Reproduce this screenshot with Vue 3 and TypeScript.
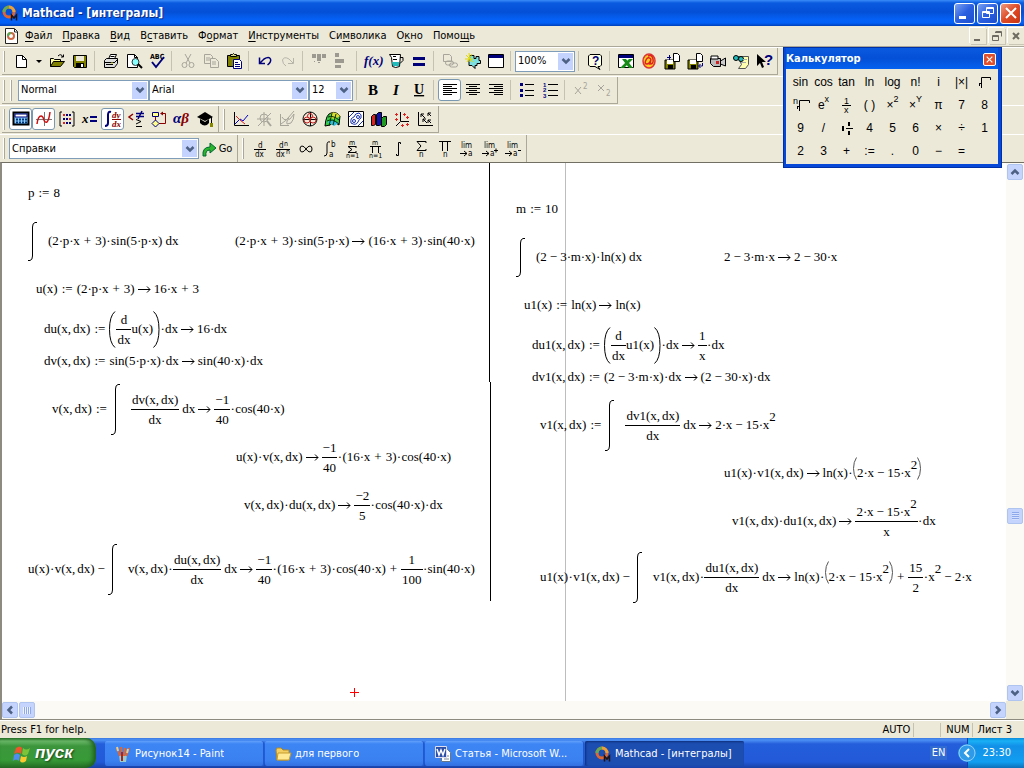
<script setup lang="ts">
import { h, type FunctionalComponent, type VNode } from 'vue'

type MathNode =
  | string
  | { frac: [MathNode[], MathNode[]] }
  | { int: 'small' | 'tall' }
  | { paren: MathNode[]; size: 'big' | 'mid' }
  | { sup: string }

interface Region { x: number; y: number; nodes: MathNode[] }
interface Tool { icon?: string; label?: string; sep?: boolean; active?: boolean; caret?: boolean }

const frac = (n: string | MathNode[], d: string): MathNode => ({ frac: [typeof n === 'string' ? [n] : n, [d]] })
const sup: MathNode = { sup: '2' }
const tall: MathNode = { int: 'tall' }
const small: MathNode = { int: 'small' }

const regions: Region[] = [
  { x: 26, y: 30, nodes: ['p:=8'] },
  { x: 26, y: 78, nodes: [small, '(2·p·x+3)•sin(5·p·x)_dx'] },
  { x: 233, y: 78, nodes: ['(2·p·x+3)•sin(5·p·x)→(16·x+3)•sin(40·x)'] },
  { x: 34, y: 126, nodes: ['u(x):=(2·p·x+3)→16·x+3'] },
  { x: 42, y: 166, nodes: ['du(x,dx):=', { paren: [frac('d', 'dx'), 'u(x)'], size: 'big' }, '•dx→16·dx'] },
  { x: 42, y: 198, nodes: ['dv(x,dx):=sin(5·p·x)•dx→sin(40·x)•dx'] },
  { x: 50, y: 246, nodes: ['v(x,dx):=', tall, frac('dv(x,dx)', 'dx'), '_dx→', frac('−1', '40'), '•cos(40·x)'] },
  { x: 234, y: 294, nodes: ['u(x)•v(x,dx)→', frac('−1', '40'), '•(16·x+3)•cos(40·x)'] },
  { x: 242, y: 342, nodes: ['v(x,dx)•du(x,dx)→', frac('−2', '5'), '•cos(40·x)•dx'] },
  { x: 26, y: 406, nodes: ['u(x)•v(x,dx)−', tall, 'v(x,dx)•', frac('du(x,dx)', 'dx'), '_dx→', frac('−1', '40'), '•(16·x+3)•cos(40·x)+', frac('1', '100'), '•sin(40·x)'] },
  { x: 514, y: 46, nodes: ['m:=10'] },
  { x: 514, y: 94, nodes: [small, '(2−3·m·x)•ln(x)_dx'] },
  { x: 722, y: 94, nodes: ['2−3·m·x→2−30·x'] },
  { x: 522, y: 142, nodes: ['u1(x):=ln(x)→ln(x)'] },
  { x: 530, y: 182, nodes: ['du1(x,dx):=', { paren: [frac('d', 'dx'), 'u1(x)'], size: 'big' }, '•dx→', frac('1', 'x'), '•dx'] },
  { x: 530, y: 214, nodes: ['dv1(x,dx):=(2−3·m·x)•dx→(2−30·x)•dx'] },
  { x: 538, y: 262, nodes: ['v1(x,dx):=', tall, frac('dv1(x,dx)', 'dx'), '_dx→2·x−15·x', sup] },
  { x: 722, y: 310, nodes: ['u1(x)•v1(x,dx)→ln(x)•', { paren: ['2·x−15·x', sup], size: 'mid' }] },
  { x: 730, y: 358, nodes: ['v1(x,dx)•du1(x,dx)→', frac(['2·x−15·x', sup], 'x'), '•dx'] },
  { x: 538, y: 414, nodes: ['u1(x)•v1(x,dx)−', tall, 'v1(x,dx)•', frac('du1(x,dx)', 'dx'), '_dx→ln(x)•', { paren: ['2·x−15·x', sup], size: 'mid' }, '+', frac('15', '2'), '•x', sup, '−2·x'] },
]

const tokenClass: Record<string, string> = {
  '·': 'dot', '•': 'dot wide', '+': 'op', '−': 'op minus', ':=': 'def', '→': 'arrow', ',': 'comma', '_': 'space',
}

function renderNodes(nodes: MathNode[]): VNode[] {
  return nodes.flatMap((node, index): VNode[] => {
    if (typeof node === 'string') {
      const parts = node.match(/:=|[·•+−→,_]|[^:·•+−→,_]+/g) ?? []
      return parts.map((part, i) => {
        const unary = index === 0 && i === 0 && part === '−'
        if (part === '→') {
          return h('svg', { class: 'arrow', viewBox: '0 0 13 7', role: 'img', 'aria-label': '→' }, [
            h('path', { d: 'M0 3.5H12M9 .5L12 3.5L9 6.5' }),
          ])
        }
        const text = part === '•' ? '·' : part === '_' ? '' : part
        return h('span', { class: unary ? 'neg' : tokenClass[part] ?? 'run' }, text)
      })
    }
    if ('frac' in node) {
      return [h('span', { class: 'frac' }, [
        h('span', { class: 'num' }, renderNodes(node.frac[0])),
        h('span', { class: 'bar' }),
        h('span', { class: 'den' }, renderNodes(node.frac[1])),
      ])]
    }
    if ('int' in node) {
      const d = node.int === 'tall' ? 'M0 50.5H2Q4.500 50 4.500 46V5Q4.500 1 7 .5H9' : 'M0 38.500H2Q4.500 38 4.500 34V5Q4.500 1 7 .5H9'
      return [h('svg', { class: ['int', node.int], viewBox: node.int === 'tall' ? '0 0 10 51' : '0 0 10 39' }, [h('path', { d })])]
    }
    if ('paren' in node) {
      const height = node.size === 'big' ? 37 : 23
      const left = node.size === 'big' ? 'M6 .5Q.5 5 .5 18.500Q.5 32 6 36.500' : 'M3.500 .5Q.5 5 .5 11.500Q.5 18 3.500 22.500'
      const right = node.size === 'big' ? 'M.5 .5Q6 5 6 18.500Q6 32 .5 36.500' : 'M.5 .5Q3.500 5 3.500 11.500Q3.500 18 .5 22.500'
      const width = node.size === 'big' ? 7 : 4
      return [h('span', { class: ['paren', node.size] }, [
        h('svg', { viewBox: `0 0 ${width} ${height}` }, [h('path', { d: left })]),
        h('span', { class: 'inner' }, renderNodes(node.paren)),
        h('svg', { viewBox: `0 0 ${width} ${height}` }, [h('path', { d: right })]),
      ])]
    }
    return [h('span', { class: 'power' }, node.sup)]
  })
}

const MathRow: FunctionalComponent<{ nodes: MathNode[] }> = (props) => h('span', { class: 'math' }, renderNodes(props.nodes))
MathRow.props = ['nodes']

const mono = 'fill="none" stroke="#000"'
const floppy = '<path d="M1 7h10v9H1z" fill="#808000" stroke="#000"/><path d="M3 7h6v4H3z" fill="#fff"/><path d="M4 12h5v4H4z" fill="#000"/>'
const page = '<path d="M9.500 .5h4l2 2v6h-6z" fill="#fff" stroke="#000"/>'
const serif = 'font-family="Liberation Serif, serif"'
const small8 = 'font-family="DejaVu Sans Condensed, sans-serif" font-size="8"'

const icons: Record<string, string> = {
  new: '<path d="M3.500 2.500h6l4 4v8h-10z" fill="#fff" stroke="#000"/><path d="M9.500 2.500v4h4" fill="none" stroke="#000"/>',
  open: '<path d="M1.500 13.500v-8h3l1 1h6v2" fill="#ffffa0" stroke="#000"/><path d="M1.500 13.500l3-5h11l-4 5z" fill="#808000" stroke="#000"/><path d="M9 3q3-3 5 1m-2 0h2.500v-2.500" fill="none" stroke="#000"/>',
  save: '<path d="M1.500 2.500h13v12h-12l-1-1z" fill="#808000" stroke="#000"/><path d="M4 3h8v5H4z" fill="#ece9d8"/><path d="M4 10h8v5H4z" fill="#000"/><path d="M9 11h2v3H9z" fill="#fff"/>',
  print: '<path d="M5.500 6l2-4.500h6l-2 4.500" fill="#fff" stroke="#000"/><path d="M1.500 7.500l2-2h11v5l-3 4h-10z" fill="#ddd" stroke="#000"/><path d="M1 9.500h11M3 11.500h7M12 9l3-3M7.500 3.500h4" stroke="#000"/><path d="M8 10h2" stroke="#dd0"/>',
  preview: '<path d="M1.500 1.500h7l3 3v10h-10z" fill="#fff" stroke="#000"/><path d="M8.500 1.500v3h3" fill="none" stroke="#000"/><circle cx="9.500" cy="9" r="3.500" fill="#8ff" stroke="#333"/><path d="M12 11l4 4" stroke="#000" stroke-width="2"/>',
  spell: `<text x="1" y="6" ${small8} font-weight="bold" style="font-size:7px">ABC</text><path d="M3 9l4 5L15 4" fill="none" stroke="#00007b" stroke-width="2"/>`,
  cut: '<g fill="none" stroke="#a7a59a"><path d="M5 1l5 9M11 1l-5 9"/><circle cx="4.500" cy="12" r="2.500"/><circle cx="11.500" cy="12" r="2.500"/></g>',
  copy: '<g fill="#ece9d8" stroke="#a7a59a"><path d="M1.500 1.500h6l2 2v7h-8zM3 5h4M3 7h4"/><path d="M7.500 5.500h5l3 3v6h-8zM9 9h4M9 11h4"/></g>',
  paste: '<path d="M1.500 2.500h12v11h-12z" fill="#808000" stroke="#000"/><path d="M4.500 3.500v-2h2l1-1 1 1h2v2z" fill="#dd8" stroke="#000"/><path d="M7.500 6.500h6l2 2v7h-8z" fill="#fff" stroke="#000080"/><path d="M9 9.500h3M9 11.500h5M9 13.500h5" stroke="#000080"/>',
  undo: '<path d="M2.500 4.500v6H8M3 10l4-4q5-3 6.500 0 1 3-3 6" fill="none" stroke="#00007b" stroke-width="1.500"/>',
  redo: '<path d="M13.500 5v5.500H8M13 10L9 6Q4 3 2.500 7q0 4 3.500 6" fill="none" stroke="#b7b5a8"/>',
  across: '<g fill="#9c9a90"><path d="M1 1h4v4H1zM6 1h4v7H6zM11 1h4v4h-4zM3 8h1v1H3zM7 9h2v1H7z"/></g>',
  down: '<g fill="#9c9a90"><path d="M1 0h4v4H1zM1 6h9v4H1zM1 12h6v3H1z"/></g>',
  fx: `<text x="-1" y="12" ${serif} font-size="13" font-weight="bold" font-style="italic" fill="#00007b">f(x)</text>`,
  cup: '<path d="M1.500 1.500h11l-1 12q-4 2-7 0l-1-9z" fill="#fff" stroke="#000"/><path d="M12 4.500h3v3l-3 3" fill="none" stroke="#000"/><path d="M4 9h7v4H5z" fill="#2bb"/><path d="M5 3.500h3M5 6.500h4" stroke="#000"/>',
  equals: '<path d="M2 4h12v3H2zM2 10h12v3H2z" fill="#00007b"/>',
  link: '<g fill="none" stroke="#a7a59a"><path d="M1.500 1.500h6l2 2v5h-8z"/><rect x="3.500" y="8" width="8" height="4" rx="2"/><rect x="7.500" y="10" width="8" height="4" rx="2"/></g>',
  gear: '<path d="M5 2.500h4v3h2v-2h3v4h1.500v3H12v2h-2v3L7 12.500H4v-4z" fill="#7de0e0" stroke="#000"/><path d="M1 2l7 7M4 0l1 9M0 6h8M7 1L2 9" stroke="#e0d800"/>',
  window: '<path d="M.5 1.500h15v13H.5z" fill="#fff" stroke="#000"/><path d="M1 2h14v3H1z" fill="#00007b"/>',
  help: '<path d="M3 1.500h10l1.500 1.500v9l-1.500 1.500h-2l2 3-5-3h-5l-1.500-1.500v-9z" fill="#ffffe1" stroke="#000"/><text x="5" y="12" font-size="12" font-weight="bold" fill="#00007b" font-family="Liberation Sans, sans-serif">?</text>',
  excel: '<path d="M.5 1.500h15v13H.5z" fill="#fff" stroke="#000"/><path d="M1 2h14v3H1z" fill="#00007b"/><path d="M4 6h4l7 9h-4zM11 6h4l-9 9H2z" fill="#188a18"/>',
  at: '<ellipse cx="8" cy="8" rx="6" ry="7" fill="#fc2" stroke="#d33" stroke-width="1.500"/><path d="M10 6q-3-3-5 1t1 4q3 0 4-5l-1 5q4 0 3-5T7 3" fill="none" stroke="#d22" stroke-width="1.500"/>',
  importDoc: floppy + page + '<path d="M3 4.500h4M5.500 2v5" stroke="#00007b"/>',
  exportDoc: floppy + page + '<path d="M15.500 10v3H12m1.500-2l-2 2 2 2" stroke="#00007b" fill="none"/>',
  camera: '<path d="M.5 5.500h10v8h-7l-3-3z" fill="#bbb" stroke="#000"/><path d="M10.500 8l5-3v8l-5-2z" fill="#ccc" stroke="#000"/><path d="M1 3h7v3H1z" fill="#fff" stroke="#000"/><path d="M6 8h3v3H6z" fill="#c22"/>',
  notes: '<path d="M5 3.500h10.500v8l-3 4h-7l3-4z" fill="#ffffb0" stroke="#555"/><g fill="#2bb" stroke="#000"><circle cx="3" cy="5" r="2.500"/><circle cx="8" cy="6" r="2.500"/></g><path d="M10 6.500h4M8 9.500h5" stroke="#aaa"/>',
  whats: '<path d="M1 1v12l3-3 2 5 2-1-2-5h4z"/><text x="8" y="12" font-size="15" font-weight="bold" fill="#00007b" font-family="Liberation Sans, sans-serif">?</text>',
  bold: `<text x="3" y="13" ${serif} font-size="15" font-weight="bold">B</text>`,
  italic: `<text x="5" y="13" ${serif} font-size="15" font-weight="bold" font-style="italic">I</text>`,
  underline: `<text x="3" y="12" ${serif} font-size="14" font-weight="bold" text-decoration="underline">U</text>`,
  left: '<path d="M1 2.500h14M1 4.500h9M1 6.500h14M1 8.500h9M1 10.500h14M1 12.500h9" stroke="#000"/>',
  center: '<path d="M1 2.500h14M4 4.500h8M1 6.500h14M4 8.500h8M1 10.500h14M4 12.500h8" stroke="#000"/>',
  right: '<path d="M1 2.500h14M6 4.500h9M1 6.500h14M6 8.500h9M1 10.500h14M6 12.500h9" stroke="#000"/>',
  bullets: '<path d="M1 1h3v3H1zM1 7h3v3H1zM1 12h3v3H1z" fill="#00007b"/><path d="M6 2.500h9M6 8.500h9M6 13.500h9" stroke="#000"/>',
  numbers: '<g font-size="6" font-weight="bold" fill="#00007b" font-family="Liberation Sans, sans-serif"><text x="1" y="5">1</text><text x="1" y="10">2</text><text x="1" y="16">3</text></g><path d="M6 2.500h10M6 8.500h10M6 13.500h10" stroke="#000"/>',
  square: '<path d="M2 5l6 7M8 5l-6 7" stroke="#a7a59a"/><text x="10" y="7" font-size="8" fill="#a7a59a">2</text>',
  lower: '<path d="M2 3l6 6M8 3l-6 6" stroke="#a7a59a"/><text x="10" y="14" font-size="8" fill="#a7a59a">2</text>',
  calc: '<path d="M.5 1.500h15v12H.5z" fill="#8cf" stroke="#000" stroke-width="2"/><path d="M2 3h12v3H2z" fill="#fff" stroke="#00007b"/><path d="M3 8.500h11M3 11.500h11" stroke="#037" stroke-width="2" stroke-dasharray="2 1"/>',
  plot: '<path d="M0 8.500h16M8.500 1v14" stroke="#777"/><path d="M1 13q1-8 4-8 2 0 3 4 1 3 3 2 2-2 3-10" fill="none" stroke="#c11" stroke-width="1.500"/>',
  matrix: '<path d="M3 1H1v14h2M13 1h2v14h-2" fill="none" stroke="#000"/><g fill="#d22"><path d="M4 3h2v2H4zM4 11h2v2H4zM10 7h2v2h-2z"/></g><g fill="#007"><path d="M7 3h2v2H7zM10 3h2v2h-2zM4 7h2v2H4zM7 7h2v2H7zM7 11h2v2H7zM10 11h2v2h-2z"/></g>',
  xeq: `<text x="0" y="12" ${serif} font-size="13" font-weight="bold" font-style="italic">x</text><path d="M8 5h7v2H8zM8 9h7v2H8z" fill="#00007b"/>`,
  calculus: `<path d="M6 1q-3-1-3 3v8q0 3-3 3" fill="none" stroke="#00007b" stroke-width="2"/><g ${serif} font-size="9" font-weight="bold" font-style="italic" fill="#8b0000"><text x="7" y="7">dy</text><text x="7" y="16">dx</text></g><path d="M7 8.500h9" stroke="#8b0000"/>`,
  bool: '<path d="M5 3L1 6l4 3" fill="none" stroke="#8b0000" stroke-width="1.500"/><path d="M8 2.500h8M8 5.500h8M14 0l-4 8" stroke="#00007b" stroke-width="1.500"/><path d="M8 8.500l5 2-5 2.500M8 15.500h6" fill="none" stroke="#000"/>',
  flow: '<path d="M1.500 1.500h6v4h-6z" fill="#ff8" stroke="#00007b"/><path d="M4.500 6v4M8 12.500h6.500v-10H10" fill="none" stroke="#8b0000"/><path d="M9 2.500l3-2v4z" fill="#8b0000"/><path d="M4.500 9l3.500 3.500L4.500 16 1 12.500z" fill="#ff8" stroke="#00007b"/>',
  greek: `<text x="-1" y="12" ${serif} font-size="15" font-weight="bold" font-style="italic"><tspan fill="#00007b">α</tspan><tspan fill="#8b0000">β</tspan></text>`,
  hat: '<path d="M0 6l8-5 8 5-8 4z"/><path d="M3 8v4q5 5 9 0V8l-4 3z"/><path d="M14.500 6v7" stroke="#000"/><path d="M13 12h3v4h-3z" fill="#880"/>',
  xy: '<path d="M1.500 1v13.500H16" fill="none" stroke="#000"/><path d="M2 13l5-5 3 2 5-6" fill="none" stroke="#00c"/><path d="M3 5l4 4 5 4" fill="none" stroke="#d22"/>',
  zoomPlot: '<g fill="none" stroke="#a7a59a"><path d="M2 15L15 2M8 1v14M1 8h14"/><circle cx="8" cy="7" r="4"/><path d="M11 10l4 5" stroke-width="2"/></g>',
  trace: '<g fill="none" stroke="#a7a59a"><path d="M1.500 3v12M1 14.500h9M3 6q3 5 6 1l6-7M2 13l8-6"/><path d="M8 13q-1-4 3-5l4-5q0 6-3 9z"/></g>',
  polar: '<circle cx="8" cy="8" r="7" fill="none" stroke="#000"/><path d="M1 8.500h14M8.500 1v14" stroke="#000"/><g fill="none" stroke="#c22"><circle cx="8" cy="5" r="2.500"/><circle cx="5" cy="9" r="3"/><circle cx="11" cy="9" r="3"/></g>',
  surface: '<path d="M0 15q1-12 6-13 5-2 9 3l-1 9-5-3-4 3z" fill="#3c4" stroke="#000"/><path d="M6 2q5-2 9 3l-5 3-5-1z" fill="#dd3"/><path d="M2 11l5-2 7 3-5 3z" fill="#3bd"/><path d="M3 6q5-2 11 3M2 10q5-3 12 3M7 2L4 15M11 3L8 14" fill="none" stroke="#030"/>',
  contour: '<path d="M.5 .5h15v15H.5z" fill="#fff" stroke="#000"/><g fill="none" stroke="#1630b0"><path d="M3 12q-1-5 3-6 1-4 5-4 3 1 2 5-2 1-3 4-2 4-7 1z"/><circle cx="6" cy="10" r="1.500"/><circle cx="10" cy="6" r="1.500"/><path d="M1 6L6 1M10 15l5-5"/></g>',
  bars: '<path d="M.5 5.500l2-2h2v10l-2 1h-2z" fill="#d22" stroke="#000"/><path d="M5.500 3.500l2-2h3v12l-2 1h-3z" fill="#11a" stroke="#000"/><path d="M10.500 7.500l2-2h3v8l-2 2h-3z" fill="#292" stroke="#000"/>',
  scatter: '<path d="M6.500 1v9.500H15M6 11l-4 4" fill="none" stroke="#000"/><path d="M1 3.500h3M2.500 2v3M9 3.500h3M10.500 2v3M1 8.500h3M2.500 7v3M12 6.500h3M13.500 5v3M7 14.500h3M8.500 13v3M12 13.500h3M13.500 12v3" stroke="#d22"/>',
  vector: '<path d="M1.500 1v13.500H16" fill="none" stroke="#000"/><path d="M8 7L4 3m0 3V3h3M14 5l-3-3m0 3V2h3M10 12L6 8m0 3V8h3M14 12l-3-3m0 3V9h3" fill="none" stroke="#000"/>',
  go: '<path d="M1 15Q0 6 8 6V2l6 5-6 5V9Q3 9 4 15z" fill="#2db52d" stroke="#063"/>',
  deriv: `<g ${small8}><text x="6" y="7">d</text><text x="3" y="16">dx</text></g><path d="M2 8.500h12" stroke="#000"/>`,
  nderiv: `<g ${small8}><text x="4" y="7">d</text><text x="1" y="16">dx</text><text x="9" y="5" style="font-size:7px">n</text><text x="11" y="13" style="font-size:7px">n</text></g><path d="M1 8.500h14" stroke="#000"/>`,
  inf: '<path d="M8 8Q6 5 4 5 2 5 2 8t2 3q2 0 4-3t4-3q2 0 2 3t-2 3q-2 0-4-3" fill="none" stroke="#000"/>',
  integ: `<path d="M9 1q-3-1-3 3v8q0 3-3 3" ${mono}/><g ${small8}><text x="10" y="6">b</text><text x="8" y="16">a</text></g>`,
  sumN: `<path d="M12 5.500H4l4 3-4 3h8M12 5v2M12 12v-2" ${mono}/><g ${small8} style="font-size:7px"><text x="5" y="4">m</text><text x="2" y="17">n=1</text></g>`,
  prodN: `<path d="M3 5.500h11M5.500 5v7M11.500 5v7" ${mono}/><g ${small8} style="font-size:7px"><text x="5" y="4">m</text><text x="2" y="17">n=1</text></g>`,
  integ0: `<path d="M10.500 3V1.500h-2V14.500h-2V13" ${mono}/>`,
  sum: `<path d="M13 2V.5H4l4 4.500-4 4.500h9V8" ${mono}/><text x="6" y="16" ${small8}>n</text>`,
  prod: `<path d="M3 .5h12M6.500 1v9M11.500 1v9" ${mono}/><text x="7" y="16" ${small8}>n</text>`,
  lim: `<g ${small8}><text x="2" y="7">lim</text><text x="9" y="15">a</text></g><path d="M1 12.500h7M5 10l3 2.500L5 15" ${mono}/>`,
  limPlus: `<g ${small8}><text x="2" y="7">lim</text><text x="8" y="15">a</text></g><path d="M0 12.500h7M4 10l3 2.500L4 15M12 9.500h4M14 7.500v4" ${mono}/>`,
  limMinus: `<g ${small8}><text x="2" y="7">lim</text><text x="8" y="15">a</text></g><path d="M0 12.500h7M4 10l3 2.500L4 15M13 9.500h3" ${mono}/>`,
  mathcad: '<circle cx="7" cy="7" r="5" fill="none" stroke="#d63" stroke-width="3"/><path d="M2 7a5 5 0 0 1 5-5" fill="none" stroke="#6a5" stroke-width="3"/><path d="M7 2a5 5 0 0 1 5 5" fill="none" stroke="#e9a13c" stroke-width="3"/><path d="M9.500 15.500V10l2.500 3 2.500-3v5.500" fill="none" stroke="#211" stroke-width="1.500"/>',
  docIcon: '<path d="M1.500 .5h9l3 3v12h-12z" fill="#fff" stroke="#222"/><circle cx="7" cy="8" r="3" fill="none" stroke="#c64" stroke-width="2"/><path d="M4 8a3 3 0 0 1 3-3" fill="none" stroke="#5a5" stroke-width="2"/><path d="M10.500 1v3h3" fill="none" stroke="#222"/>',
  paint: '<path d="M4 9h8l-1 7H5z" fill="#9cc"/><path d="M5 10L2 2M7 10L6 1M9 10l1-8M11 10l3-8" stroke="#d63" stroke-width="2"/><path d="M2 1l1 4M13 3l-1 4" stroke="#ec8" stroke-width="2"/><path d="M7 15V6" stroke="#a22" stroke-width="2"/>',
  folder: '<path d="M1 4l1-2h4l2 2h6v10H2z" fill="#f3cf63" stroke="#b58a20"/><path d="M3 7h13l-2 7H2z" fill="#ffe994" stroke="#c59b2e"/>',
  word: '<path d="M6.500 3.500h6l3 3v9h-9z" fill="#fff" stroke="#678"/><path d="M.5 .5h11v11H.5z" fill="#2c4fa8" stroke="#dde"/><path d="M2 3l2 6 2-5 2 5 2-6" fill="none" stroke="#fff" stroke-width="1.500"/><path d="M9 13h5M12 10h2" stroke="#789"/>',
  flag: '<path d="M3 3q4-3 6 0L8 9Q5 6 1 9z" fill="#f0542c"/><path d="M10 3q3 3 7 0l-2 6q-3 3-6 0z" fill="#7cc33a"/><path d="M1 10q3-3 6 0l-1 6q-3-3-6 0z" fill="#4f8df0"/><path d="M8 11q3 2 6 0l-1 5q-4 3-6 0z" fill="#fbc92d"/>',
  up: '<path d="M4.500 10L8 6.500l3.500 3.500" fill="none" stroke="#4d6185" stroke-width="2.500"/>',
  dn: '<path d="M4.500 6L8 9.500 11.500 6" fill="none" stroke="#4d6185" stroke-width="2.500"/>',
  lt: '<path d="M10 4.500L6.500 8l3.500 3.500" fill="none" stroke="#4d6185" stroke-width="2.500"/>',
  rt: '<path d="M6 4.500L9.500 8 6 11.500" fill="none" stroke="#4d6185" stroke-width="2.500"/>',
  min: '<path d="M2 11h7v3H2z" fill="#fff"/>',
  max: '<path d="M6.500 2.500h7v6h-7zM6 3.500h8M2.500 6.500h7v6h-7zM2 7.500h8" fill="none" stroke="#fff"/>',
  close: '<path d="M3 3l10 10M13 3L3 13" stroke="#fff" stroke-width="2"/>',
  mmin: '<path d="M4 11h6v2H4z" fill="#6d6b62"/>',
  mmax: '<path d="M6.500 3.500h6v5M6 4.500h7M3.500 7.500h6v5h-6zM3 8.500h7" fill="none" stroke="#6d6b62"/>',
  mclose: '<path d="M5 5l6 6M11 5l-6 6" stroke="#6d6b62" stroke-width="2"/>',
  tray: '<circle cx="8" cy="8" r="9" fill="#2f9be8"/><circle cx="8" cy="8" r="8" fill="none" stroke="#8fd0fa"/><path d="M10 4L6 8l4 4" fill="none" stroke="#fff" stroke-width="2"/>',
}

const Icon: FunctionalComponent<{ name: string }> = (props) =>
  h('svg', { class: 'icon', viewBox: '0 0 16 16', 'aria-hidden': 'true', innerHTML: icons[props.name] })
Icon.props = ['name']

const tools = (list: string): Tool[] =>
  list.split(' ').map((name) =>
    name === '|' ? { sep: true } : { icon: name.replace(/[*^]/, ''), active: name.endsWith('*'), caret: name.endsWith('^') })

const standardA = tools('new^ open save | print preview spell | cut copy paste | undo redo | across down | fx cup equals | link gear window |')
const standardB = tools('| help | excel at importDoc exportDoc camera notes whats')
const formatting = tools('| bold italic underline | left* center right | bullets numbers | square lower')
const mathTools = tools('calc* plot* matrix xeq calculus* bool flow greek hat')
const graphTools = tools('xy zoomPlot trace polar surface contour bars scatter vector')
const calculusTools = tools('deriv nderiv inf integ sumN prodN integ0 sum prod lim limPlus limMinus')

const menus: [string, string, string][] = [
  ['', 'Ф', 'айл'], ['', 'П', 'равка'], ['', 'В', 'ид'], ['В', 'с', 'тавить'], ['Ф', 'о', 'рмат'],
  ['', 'И', 'нструменты'], ['Си', 'м', 'волика'], ['О', 'к', 'но'], ['Помо', 'щ', 'ь'],
]

const calcKeys = ['sin', 'cos', 'tan', 'ln', 'log', 'n!', 'i', '|×|', 'sqrt', 'nroot', 'exp', 'inv', '( )', 'sq', 'pow', 'π', '7', '8',
  '9', '/', 'mixed', '4', '5', '6', '×', '÷', '1', '2', '3', '+', ':=', '.', '0', '−', '=']

const windows = [
  { icon: 'paint', title: 'Рисунок14 - Paint', active: false },
  { icon: 'folder', title: 'для первого', active: false },
  { icon: 'word', title: 'Статья - Microsoft W...', active: false },
  { icon: 'mathcad', title: 'Mathcad - [интегралы]', active: true },
]
</script>

<template>
  <div class="screen">
    <header class="titlebar">
      <Icon name="mathcad" />
      <h1>Mathcad - [интегралы]</h1>
      <div class="winbuttons">
        <button v-for="b in ['min', 'max', 'close']" :key="b" :class="b" :aria-label="b"><Icon :name="b" /></button>
      </div>
    </header>

    <nav class="menubar">
      <Icon name="docIcon" />
      <button v-for="m in menus" :key="m[2]">{{ m[0] }}<u>{{ m[1] }}</u>{{ m[2] }}</button>
      <div class="mdibuttons">
        <button v-for="b in ['mmin', 'mmax', 'mclose']" :key="b" :aria-label="b.slice(1)"><Icon :name="b" /></button>
      </div>
    </nav>

    <div class="row">
      <div class="band">
        <i class="grip"></i>
        <template v-for="(t, i) in standardA" :key="i">
          <i v-if="t.sep" class="sep"></i>
          <button v-else class="tool" :aria-label="t.icon"><Icon :name="t.icon!" /></button>
          <button v-if="t.caret" class="caret" aria-label="new from template"></button>
        </template>
        <label class="combo zoom"><select aria-label="Zoom"><option>100%</option></select><span><Icon name="dn" /></span></label>
        <template v-for="(t, i) in standardB" :key="i">
          <i v-if="t.sep" class="sep"></i>
          <button v-else class="tool" :aria-label="t.icon"><Icon :name="t.icon!" /></button>
        </template>
      </div>
    </div>
    <div class="row">
      <div class="band">
        <i class="grip"></i><i class="grip"></i>
        <label class="combo style"><select aria-label="Style"><option>Normal</option></select><span><Icon name="dn" /></span></label>
        <label class="combo font"><select aria-label="Font"><option>Arial</option></select><span><Icon name="dn" /></span></label>
        <label class="combo size"><select aria-label="Size"><option>12</option></select><span><Icon name="dn" /></span></label>
        <template v-for="(t, i) in formatting" :key="i">
          <i v-if="t.sep" class="sep"></i>
          <button v-else class="tool" :class="{ active: t.active }" :aria-label="t.icon"><Icon :name="t.icon!" /></button>
        </template>
      </div>
    </div>
    <div class="row">
      <div class="band">
        <i class="grip"></i>
        <button v-for="t in mathTools" :key="t.icon" class="tool" :class="{ active: t.active }" :aria-label="t.icon"><Icon :name="t.icon!" /></button>
      </div>
      <div class="band">
        <i class="grip"></i>
        <button v-for="t in graphTools" :key="t.icon" class="tool" :aria-label="t.icon"><Icon :name="t.icon!" /></button>
      </div>
    </div>
    <div class="row last">
      <div class="band resources">
        <i class="grip"></i>
        <label class="combo help"><select aria-label="Resources"><option>Справки</option></select><span><Icon name="dn" /></span></label>
        <button class="go"><Icon name="go" />Go</button>
      </div>
      <div class="band">
        <i class="grip"></i>
        <button v-for="t in calculusTools" :key="t.icon" class="tool" :aria-label="t.icon"><Icon :name="t.icon!" /></button>
      </div>
    </div>

    <main class="document">
      <div class="sheet">
        <i class="rule first"></i><i class="rule second"></i><i class="margin"></i>
        <div v-for="(r, i) in regions" :key="i" class="region" :style="{ left: r.x + 'px', top: r.y + 'px' }">
          <MathRow :nodes="r.nodes" />
        </div>
        <i class="cursor"></i>
      </div>
      <div class="vscroll">
        <button aria-label="Scroll up"><Icon name="up" /></button>
        <i class="thumb"></i>
        <button aria-label="Scroll down"><Icon name="dn" /></button>
      </div>
      <div class="hscroll">
        <button aria-label="Scroll left"><Icon name="lt" /></button>
        <i class="thumb"></i>
        <button aria-label="Scroll right"><Icon name="rt" /></button>
      </div>
    </main>

    <footer class="status">
      <span class="hint">Press F1 for help.</span>
      <span class="auto">AUTO</span><span class="blank"></span><span class="num">NUM</span><span class="page">Лист 3</span>
    </footer>

    <div class="taskbar">
      <button class="start"><Icon name="flag" />пуск</button>
      <div class="tasks">
        <button v-for="w in windows" :key="w.title" :class="{ active: w.active }"><Icon :name="w.icon" /><span>{{ w.title }}</span></button>
      </div>
      <span class="lang">EN</span>
      <div class="tray"><button aria-label="Show hidden icons"><Icon name="tray" /></button><time>23:30</time></div>
    </div>

    <section class="calculator">
      <header><h2>Калькулятор</h2><button aria-label="Close"><Icon name="close" /></button></header>
      <div class="keys">
        <button v-for="k in calcKeys" :key="k">
          <svg v-if="k === 'sqrt'" viewBox="0 0 20 20"><path d="M4.500 11v3M4 11.500h2M6.500 16V5.500H15.500V8" /></svg>
          <svg v-else-if="k === 'nroot'" viewBox="0 0 20 20"><path d="M6.500 11v3M6 11.500h2M8.500 16V5.500H18.500V8" /><text x="2" y="9" class="tiny">n</text></svg>
          <svg v-else-if="k === 'inv'" viewBox="0 0 20 20"><path d="M5 10.500h9" /><text x="7" y="9" class="tiny">1</text><text x="7" y="18" class="tiny">x</text></svg>
          <svg v-else-if="k === 'mixed'" viewBox="0 0 20 20"><path d="M9 10.500h7" /><path d="M6 8v5M12 4v4M12 13v4" class="thick" /></svg>
          <template v-else-if="k === 'exp'">e<sup>x</sup></template>
          <template v-else-if="k === 'sq'">×<sup>2</sup></template>
          <template v-else-if="k === 'pow'">×<sup>Y</sup></template>
          <template v-else>{{ k }}</template>
        </button>
      </div>
    </section>
  </div>
</template>

<style>
html, body { height: 100%; overflow: hidden; }
#app { height: 100%; }
</style>

<style scoped>
.screen {
  position: relative;
  display: flex;
  flex-direction: column;
  height: 100vh;
  background: #ece9d8;
  color: #000;
  font: 11px/14px "DejaVu Sans Condensed", "DejaVu Sans", sans-serif;
}
button {
  display: inline-flex;
  align-items: center;
  justify-content: center;
  padding: 0;
  border: 0;
  background: none;
  color: inherit;
  font: inherit;
}
:deep(.icon) { flex: none; width: 16px; height: 16px; overflow: visible; }

.titlebar {
  flex: none;
  display: flex;
  align-items: center;
  gap: 4px;
  height: 26px;
  box-sizing: border-box;
  padding: 0 3px 0 2px;
  background: linear-gradient(#3a8cf8 0, #0a5ae0 3px, #0450d6 12px, #0562f8 20px, #0360f6 23px, #0040b8 26px);
  color: #fff;
}
.titlebar h1 { flex: 1; margin: 0; font: bold 12px/18px "DejaVu Sans Condensed", sans-serif; text-shadow: 1px 1px #0a2a80; }
.winbuttons { display: flex; gap: 2px; }
.winbuttons button {
  width: 21px;
  height: 21px;
  box-sizing: border-box;
  border: 1px solid #fff;
  border-radius: 3px;
  background: linear-gradient(135deg, #7ba2f2, #2a5fe0 50%, #1c4fd0);
}
.winbuttons .close { background: linear-gradient(135deg, #ee9a80, #dd4a25 50%, #c83510); }

.menubar { flex: none; display: flex; align-items: center; gap: 10px; height: 20px; padding-left: 4px; border-bottom: 1px solid #aca899; }
.menubar > :deep(.icon) { margin-right: -5px; }
.menubar u { text-underline-offset: 2px; }
.mdibuttons { display: flex; gap: 3px; margin-left: auto; }
.mdibuttons button { width: 16px; height: 16px; box-shadow: 1px 1px #c9c6b6, -1px -1px #fff; }

.row { flex: none; display: flex; height: 28px; padding-left: 2px; border-top: 1px solid #fff; }
.row.last { height: 27px; }
.band { display: flex; align-items: center; height: 27px; box-sizing: border-box; padding-right: 2px; border-right: 1px solid #aca899; border-bottom: 1px solid #aca899; }
.band + .band { padding-left: 3px; }
.last .band { border-bottom: 0; }
.grip { flex: none; width: 2px; height: 21px; margin: 0 4px 0 1px; border-left: 1px solid #fff; border-right: 1px solid #aca899; box-sizing: border-box; }
.sep { flex: none; width: 1px; height: 20px; margin: 0 4px 0 3px; background: #c5c2b2; }
.tool { flex: none; width: 23px; height: 22px; box-sizing: border-box; }
.tool.active { border: 1px solid #7a98af; border-radius: 3px; background: #fff; }
.caret { width: 13px; height: 20px; }
.caret::before { content: ""; border: 3px solid transparent; border-top-color: #000; border-bottom: 0; }
.combo { position: relative; flex: none; height: 21px; box-sizing: border-box; border: 1px solid #7f9db9; background: #fff; }
.combo select { appearance: none; width: 100%; height: 100%; padding: 0 18px 0 2px; border: 0; background: transparent; color: #000; font: inherit; }
.combo span { position: absolute; top: 1px; right: 1px; display: flex; align-items: center; justify-content: center; width: 15px; height: 17px; background: #c3d3fd; pointer-events: none; }
.combo.zoom { width: 60px; }
.combo.style { width: 131px; margin-left: 2px; }
.combo.font { width: 160px; }
.combo.size { width: 44px; }
.combo.help { width: 190px; }
.go { gap: 1px; width: 36px; height: 20px; }

.document {
  flex: 1;
  min-height: 0;
  display: grid;
  grid-template-columns: minmax(0, 1fr) 18px;
  grid-template-rows: minmax(0, 1fr) 18px;
  border-top: 1px solid #716f64;
  border-left: 2px solid #8d8b80;
  border-bottom: 1px solid #8d8b80;
}
.sheet { position: relative; overflow: hidden; background: #fff; }
.region { position: absolute; display: flex; margin-top: -8px; font: 13px/16px "Liberation Serif", serif; white-space: nowrap; }
.region :deep(.math), .region :deep(.inner), .region :deep(.num), .region :deep(.den) { display: flex; align-items: center; justify-content: center; height: 16px; }
.region :deep(svg) { flex: none; fill: none; stroke: #000; }
.region :deep(.dot) { width: 4px; text-align: center; }
.region :deep(.wide) { width: 5px; }
.region :deep(.op) { padding: 0 4px; }
.region :deep(.minus) { padding: 0 3px; }
.region :deep(.def) { padding: 0 4px; }
.region :deep(.comma) { padding-right: 2px; }
.region :deep(.space) { width: 3px; }
.region :deep(svg.arrow) { width: 13px; height: 7px; margin: 0 3px; }
.region :deep(.frac) { display: grid; justify-items: stretch; }
.region :deep(.num) { padding: 1px 1px; }
.region :deep(.den) { padding: 2px 1px 0; }
.region :deep(.bar) { height: 1px; background: #000; }
.region :deep(.int) { width: 10px; margin-right: 10px; }
.region :deep(.small) { height: 39px; }
.region :deep(.tall) { height: 51px; }
.region :deep(.paren) { display: flex; align-items: center; }
.region :deep(.big > svg) { width: 7px; height: 37px; }
.region :deep(.mid > svg) { width: 4px; height: 23px; stroke: #555; }
.region :deep(.mid) { padding-bottom: 10px; }
.region :deep(.mid > .inner) { padding-top: 10px; }
.region :deep(.power) { padding-bottom: 16px; }
.rule { position: absolute; width: 1px; background: #000; }
.rule.first { left: 487px; top: 0; height: 219px; }
.rule.second { left: 488px; top: 219px; height: 219px; }
.margin { position: absolute; left: 563px; top: 0; bottom: 0; width: 1px; background: #bdbdbd; }
.cursor { position: absolute; left: 348px; top: 525px; width: 9px; height: 9px; background: linear-gradient(red, red) center / 9px 1px no-repeat, linear-gradient(red, red) center / 1px 9px no-repeat; }

.vscroll, .hscroll { display: flex; align-items: center; gap: 1px; background: #fbfaf4; }
.vscroll { grid-row: 1; grid-column: 2; flex-direction: column; padding-top: 1px; }
.hscroll { grid-row: 2; grid-column: 1; }
.document::after { content: ""; background: #ece9d8; }
.vscroll button, .hscroll button, .thumb { flex: none; width: 16px; height: 16px; box-sizing: border-box; border: 1px solid #b0c4f0; border-radius: 2px; background: #c5d4fc; }
.vscroll button:last-child { margin-top: auto; }
.hscroll button:last-child { margin-left: auto; }
.vscroll .thumb { margin-top: 327px; background: repeating-linear-gradient(#8ea8ec 0 1px, #d5e0ff 1px 2px) center / 7px 8px no-repeat #c5d4fc; }
.hscroll .thumb { background: repeating-linear-gradient(90deg, #eef3ff 0 1px, #8ea8ec 1px 2px) center / 8px 7px no-repeat #c5d4fc; }

.status { flex: none; display: flex; align-items: center; height: 17px; padding: 0 12px 0 1px; border-top: 1px solid #fff; }
.status .hint { flex: 1; }
.status .auto, .status .blank, .status .num { border-right: 1px solid #c5c2b2; }
.status .auto { padding-right: 3px; }
.status .blank { width: 26px; height: 14px; }
.status .num { padding: 0 3px 0 5px; }
.status .page { padding-left: 4px; }

.taskbar { flex: none; display: flex; align-items: stretch; height: 30px; background: linear-gradient(#3b78e0 0, #4b90f5 2px, #245edb 6px, #2259d8 24px, #1941a5 30px); color: #fff; font-size: 11px; }
.start {
  gap: 6px;
  width: 96px;
  padding-right: 10px;
  border-radius: 0 10px 10px 0;
  background: linear-gradient(#2c7c2c 0, #6cb96a 3px, #3c963c 8px, #379a37 22px, #276f27 30px);
  box-shadow: inset -3px 0 4px #1f5f1f;
  font: italic bold 17px/20px "Liberation Sans", sans-serif;
  text-shadow: 1px 1px 2px #1a401a;
}
.tasks { flex: 1; display: flex; gap: 1px; min-width: 0; padding: 3px 0 2px 9px; }
.tasks button { flex: 0 1 159px; justify-content: flex-start; gap: 4px; min-width: 0; padding-left: 10px; border-radius: 2px; background: linear-gradient(#62a0fa 0, #3d85f5 3px, #3a80f0 20px, #3270e0); box-shadow: inset -1px 0 #2158cc; }
.tasks button.active { background: #1c4db0; box-shadow: inset 1px 1px 2px #10307a; }
.tasks span { overflow: hidden; white-space: nowrap; }
.lang { align-self: center; padding: 0 2px; background: #316ad0; }
.tray { display: flex; align-items: center; gap: 7px; margin-left: 20px; padding-right: 13px; border-left: 1px solid #1042af; background: linear-gradient(#0c8ddb 0, #19b0f5 3px, #1290e8 8px, #119ef0 24px, #0d6fb8 30px); }
.tray button { margin-left: -9px; }

.calculator { position: absolute; top: 47px; right: 22px; width: 219px; box-sizing: border-box; padding: 1px 4px 4px 3px; background: #0848d8; box-shadow: inset 0 0 0 1px #0030a8; }
.calculator header { display: flex; align-items: center; justify-content: space-between; height: 20px; padding-top: 1px; padding-right: 2px; color: #fff; background: linear-gradient(#0a5ae0, #0450d6 50%, #0562f0); }
.calculator h2 { margin: 0; font: bold 11px/16px "DejaVu Sans Condensed", sans-serif; }
.calculator header button { width: 13px; height: 13px; box-sizing: border-box; border: 1px solid #fff; border-radius: 2px; background: #e0502c; }
.calculator header button :deep(.icon) { width: 9px; height: 9px; }
.keys { display: grid; grid-template-columns: repeat(9, 23px); grid-auto-rows: 23px; height: 95px; box-sizing: border-box; padding: 1px 2px 2px 3px; background: #ece9d8; }
.keys button { font: 12px/16px "Liberation Sans", sans-serif; white-space: nowrap; }
.keys svg { width: 20px; height: 20px; overflow: visible; fill: none; stroke: #000; }
.keys .thick { stroke-width: 2; }
.keys .tiny { fill: #000; stroke: none; font-size: 9px; }
.keys sup { align-self: flex-start; font-size: 9px; line-height: 12px; }
</style>
